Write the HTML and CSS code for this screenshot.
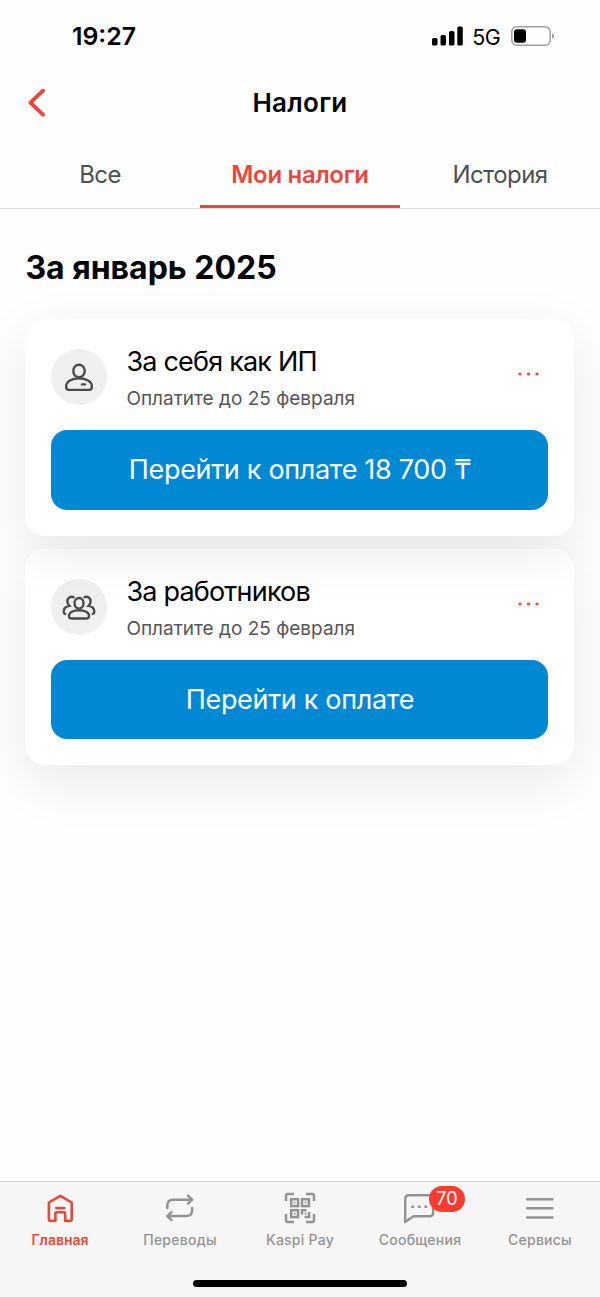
FILE: index.html
```html
<!DOCTYPE html>
<html lang="ru">
<head>
<meta charset="utf-8">
<title>Налоги</title>
<link rel="stylesheet" href="styles.css">
</head>
<body>
<div class="screen">
  <div class="status">
    <span class="time">19:27</span>
    <div class="status-right">
      <svg width="31" height="20" viewBox="0 0 31 20"><rect x="0" y="12" width="5.5" height="7.5" rx="1.6"/><rect x="8.5" y="9" width="5.5" height="10.5" rx="1.6"/><rect x="17" y="5" width="5.5" height="14.5" rx="1.6"/><rect x="25.3" y="0.5" width="5.5" height="19" rx="1.6"/></svg>
      <span class="network">5G</span>
      <svg width="44" height="20" viewBox="0 0 44 20"><rect x="0.8" y="0.8" width="38.4" height="18.4" rx="5" fill="none" stroke="#a0a0a0" stroke-width="1.5"/><rect x="3" y="3.2" width="12" height="13.6" rx="3"/><path d="M41 7.5c2.8.7 2.8 4.500 0 5.200z" fill="#a0a0a0"/></svg>
    </div>
  </div>
  <header class="header">
    <svg class="back" width="20" height="30" viewBox="0 0 20 30"><path d="M17 2.7 4.400 14.700 17 26.700" fill="none" stroke="#e8483b" stroke-width="3.9" stroke-linecap="round" stroke-linejoin="round"/></svg>
    <h1 class="title">Налоги</h1>
  </header>
  <nav class="tabs">
    <div class="tab"><span>Все</span></div>
    <div class="tab tab-active"><span>Мои налоги</span></div>
    <div class="tab"><span>История</span></div>
  </nav>
  <main class="content">
    <h2 class="period">За январь 2025</h2>
    <section class="card card-self">
      <div class="card-head">
        <div class="avatar"><svg width="30" height="30" viewBox="0 0 30 30" fill="none" stroke="#4b4b4b" stroke-width="2.4" stroke-linecap="round"><ellipse cx="15" cy="9" rx="5.7" ry="6.3"/><path d="M15 16.400C8 16.400 2.200 19.300 2.200 24.200V25.300Q2.200 27.900 4.800 27.900H25.200Q27.800 27.900 27.800 25.300V24.200C27.800 19.300 22 16.400 15 16.400Z"/><path d="M18 22.400h3"/></svg></div>
        <div class="card-text"><div class="card-title">За себя как ИП</div><div class="due">Оплатите до 25 февраля</div></div>
        <svg class="more" width="22" height="4" viewBox="0 0 22 4" fill="#e8483b"><circle cx="2" cy="2" r="1.6"/><circle cx="10.5" cy="2" r="1.6"/><circle cx="19" cy="2" r="1.6"/></svg>
      </div>
      <div class="pay"><span>Перейти к оплате 18 700 ₸</span></div>
    </section>
    <section class="card">
      <div class="card-head">
        <div class="avatar"><svg width="36" height="28" viewBox="0 0 36 28" fill="none" stroke="#4b4b4b" stroke-width="2.4" stroke-linecap="round"><ellipse cx="18" cy="10.3" rx="4.5" ry="5.3"/><path d="M10.500 25.500H25.500Q28 25.500 28 23C28 19.500 24 17.300 18 17.300S8 19.500 8 23Q8 25.500 10.500 25.500Z"/><path d="M12.500 4.200C9.500 2.800 6.300 4.800 6.400 8.400c.1 2 .7 3.300 2 4.500C4.500 13.600 2.700 15.700 2.700 18.700q0 1.700 1.500 2.300M23.500 4.200c3-1.400 6.200.6 6.100 4.200-.1 2-.7 3.300-2 4.500 3.900.7 5.700 2.800 5.700 5.800q0 1.700-1.500 2.300"/></svg></div>
        <div class="card-text"><div class="card-title">За работников</div><div class="due">Оплатите до 25 февраля</div></div>
        <svg class="more" width="22" height="4" viewBox="0 0 22 4" fill="#e8483b"><circle cx="2" cy="2" r="1.6"/><circle cx="10.5" cy="2" r="1.6"/><circle cx="19" cy="2" r="1.6"/></svg>
      </div>
      <div class="pay"><span>Перейти к оплате</span></div>
    </section>
  </main>
  <footer class="bottom">
    <nav class="bottom-nav">
      <div class="item item-active">
        <svg width="34" height="34" viewBox="0 0 34 34" fill="none" stroke="currentColor" stroke-width="2.6" stroke-linejoin="round" stroke-linecap="round"><path d="M5.900 11.500 17.300 4.800 28.700 11.500V28.300Q28.700 29.900 27.100 29.900H22.200V22.200Q22.200 21.200 21.200 21.200H13.400Q12.400 21.200 12.400 22.200V29.900H7.500Q5.900 29.900 5.900 28.300ZM13.300 17.100h8"/></svg>
        <span>Главная</span>
      </div>
      <div class="item">
        <svg width="34" height="34" viewBox="0 0 34 34" fill="none" stroke="currentColor" stroke-width="2.5" stroke-linejoin="round" stroke-linecap="round"><path d="M4.300 17V14.500Q4.300 8.700 10.300 8.700H28.500M25 4.700 29.200 8.700 25 12.600M29.100 17V19.300Q29.100 25.100 23.100 25.100H5M8.500 21.200 4.300 25.100 8.500 29.100"/></svg>
        <span>Переводы</span>
      </div>
      <div class="item">
        <svg width="34" height="34" viewBox="0 0 34 34" fill="none" stroke="currentColor" stroke-width="2.5"><path d="M3 10V5q0-2 2-2h6M23 3h6q2 0 2 2v5M3 23v6q0 2 2 2h6M23 31h6q2 0 2-2v-6"/><rect x="8.2" y="8.2" width="6.9" height="6.9"/><rect x="19" y="8.2" width="6.9" height="6.9"/><rect x="8.2" y="19.2" width="6.9" height="6.9"/><path d="M19 23.500V19.200H23.500M26.100 21V26.100H21.500"/><path d="M10.900 11.700h1.600M21.700 11.700h1.600M10.900 22.700h1.600M21.700 22.700h2" stroke-width="1.7"/></svg>
        <span>Kaspi Pay</span>
      </div>
      <div class="item">
        <svg width="34" height="34" viewBox="0 0 34 34" fill="none" stroke="currentColor" stroke-width="2.4" stroke-linejoin="round"><path d="M2.200 31V8Q2.200 4.200 6 4.200H26.300Q30.100 4.200 30.100 8V21.400Q30.100 25.200 26.300 25.200H10.500Z"/><path d="M8.300 15.700h2.800M14.900 15.700h2.800M21.500 15.700h2.800" stroke-width="2.6"/></svg>
        <b class="badge">70</b>
        <span>Сообщения</span>
      </div>
      <div class="item">
        <svg width="34" height="34" viewBox="0 0 34 34" fill="none" stroke="currentColor" stroke-width="2.5" stroke-linecap="round"><path d="M4.200 8.200h25.200M4.200 17.200h25.200M4.200 26.400h25.200"/></svg>
        <span>Сервисы</span>
      </div>
    </nav>
    <div class="home-indicator"></div>
  </footer>
</div>
</body>
</html>
```
FILE: styles.css
```css
* { box-sizing: border-box; }
body { margin: 0; background: #fefefe; font-family: Inter, "Liberation Sans", sans-serif; color: #000; }
.screen { width: 600px; height: 1297px; display: flex; flex-direction: column; overflow: hidden; }
.status { height: 72px; display: flex; justify-content: space-between; align-items: center; padding: 0 45px 0 72px; }
.time { font-size: 24.8px; font-weight: 600; }
.status-right { display: flex; align-items: center; }
.network { font-size: 21.5px; margin: 0 11px 0 9px; letter-spacing: -0.7px; padding-top: 1px; }
.header { height: 68px; display: grid; grid-template-columns: 60px 1fr 60px; align-items: center; padding-bottom: 7px; }
.back { margin-left: 25.5px; }
.title { margin: 0; font-size: 26px; font-weight: 600; letter-spacing: 0.3px; text-align: center; }
.tabs { height: 69px; display: grid; grid-template-columns: repeat(3, 1fr); border-bottom: 1px solid #dedede; }
.tab { display: flex; align-items: center; justify-content: center; font-size: 24px; letter-spacing: -0.6px; color: #4f4f4f; border-bottom: 3px solid transparent; padding-top: 3px; }
.tab-active { color: #e8483b; font-weight: 600; letter-spacing: -0.3px; border-bottom-color: #e8483b; }
.content { flex: 1; padding: 0 25.6px 0 25.4px; display: flex; flex-direction: column; }
.period { margin: 39px 0 31px; font-size: 32px; line-height: 40px; font-weight: 700; }
.card { height: 216.5px; padding: 26px; border-radius: 20px; background: #fff; box-shadow: 0 17px 54px rgba(0, 0, 0, 0.085); flex: none; }
.card-self { position: relative; z-index: 1; margin-bottom: 13px; }
.card-head { display: flex; height: 85px; }
.avatar { width: 56px; height: 56px; margin-top: 4px; border-radius: 50%; background: #efefef; display: flex; align-items: center; justify-content: center; }
.card-text { margin-left: 19px; flex: 1; }
.card-title { font-size: 27px; line-height: 34px; letter-spacing: -0.8px; }
.due { font-size: 19px; line-height: 24px; margin-top: 8px; color: #555; }
.more { margin: 27px 8px 0 0; }
.pay { height: 79.5px; padding-bottom: 0.5px; border-radius: 16px; background: #0089d2; color: #fff; font-size: 27px; letter-spacing: -0.32px; display: flex; align-items: center; justify-content: center; }
.bottom { height: 116px; background: #f6f6f6; border-top: 1px solid #d2d2d2; display: flex; flex-direction: column; justify-content: space-between; align-items: center; padding-bottom: 10px; }
.bottom-nav { width: 100%; display: grid; grid-template-columns: repeat(5, 1fr); padding-top: 9px; }
.item { position: relative; display: flex; flex-direction: column; align-items: center; color: #939393; font-size: 14px; line-height: 20px; gap: 5px; font-weight: 500; letter-spacing: 0.25px; }
.item-active { color: #e8483b; font-weight: 600; letter-spacing: 0; }
.badge { position: absolute; left: 69px; top: -5px; width: 36px; height: 26px; border-radius: 13px; background: #fb3b30; color: #fff; font-size: 18px; line-height: 26px; font-weight: 400; text-align: center; letter-spacing: 0; }
.home-indicator { width: 214px; height: 7px; border-radius: 4px; background: #000; }
```
